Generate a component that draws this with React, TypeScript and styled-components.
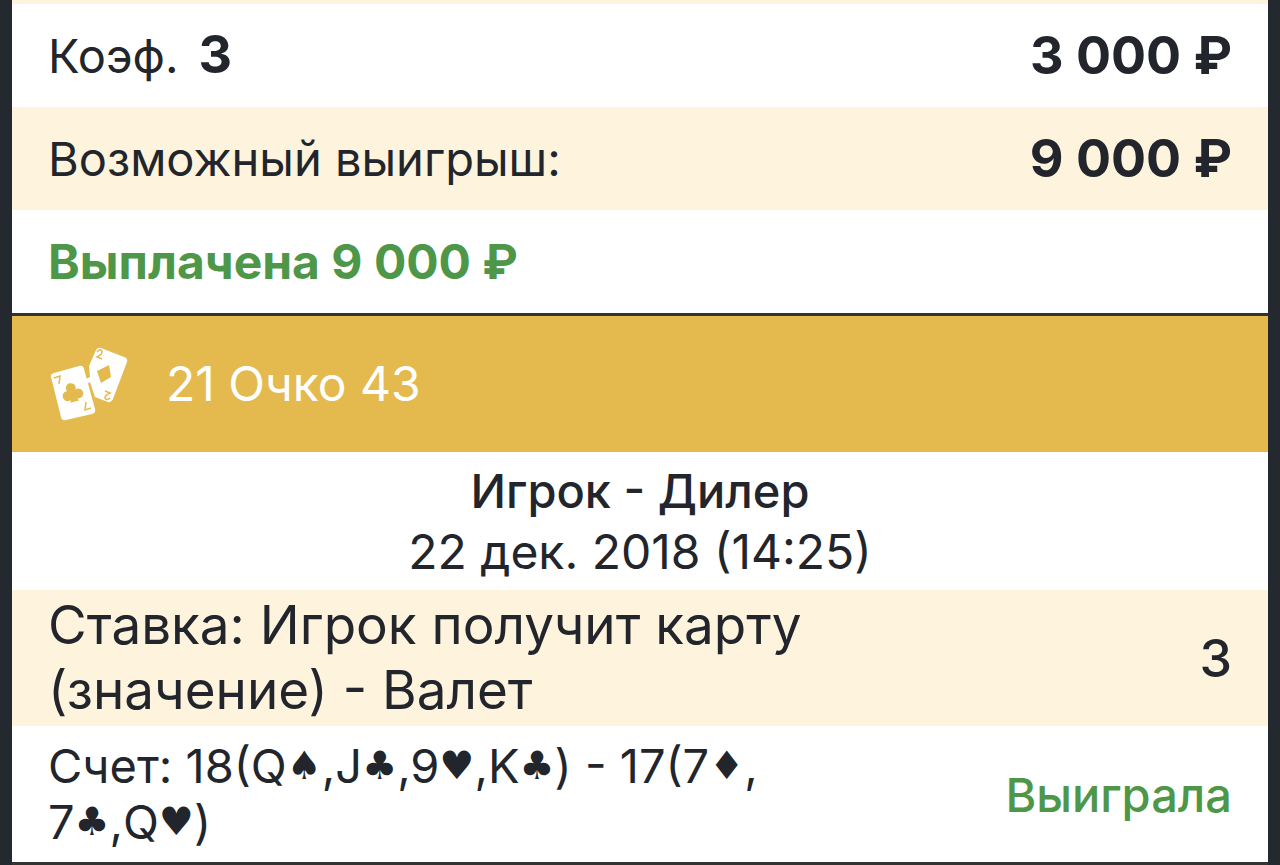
import React from 'react';
import styled, { createGlobalStyle } from 'styled-components';

const ink = '#22262c';
const cream = '#fef3dc';
const gold = '#e4ba4f';
const green = '#4f9748';

const GlobalStyle = createGlobalStyle`
  * { box-sizing: border-box; }
  body {
    margin: 0;
    background: #23292e;
    color: ${ink};
    font-family: Inter, 'Liberation Sans', sans-serif;
    font-size: 47px;
  }
`;

const Page = styled.main`
  padding: 0 12px;
`;

const Coupon = styled.article`
  background: #fff;
  border-bottom: 3px solid #33342f;
`;

const PreviousRow = styled.div`
  height: 4px;
  background: ${cream};
`;

const Row = styled.div<{ $tinted?: boolean; $tall?: boolean }>`
  display: flex;
  align-items: center;
  justify-content: space-between;
  gap: 24px;
  min-height: ${(p) => (p.$tall ? 136 : 103)}px;
  padding: 0 36px;
  background: ${(p) => (p.$tinted ? cream : '#fff')};
`;

const Label = styled.span`
  line-height: 56px;
`;

const Amount = styled.strong`
  font-size: 52px;
  font-weight: 700;
  line-height: 56px;
`;

const Odds = styled(Amount)`
  margin-left: 20px;
`;

const Paid = styled.strong`
  font-size: 48px;
  font-weight: 700;
  line-height: 56px;
  color: ${green};
`;

const GameHeader = styled.header`
  display: flex;
  align-items: center;
  gap: 38px;
  min-height: 136px;
  padding: 0 36px;
  background: ${gold};
  color: #fff;
`;

const GameTitle = styled.h2`
  margin: 0;
  font-size: 48px;
  font-weight: 400;
  line-height: 56px;
`;

const CardsIcon = styled.svg`
  display: block;
  width: 80px;
  height: 80px;
  flex: none;
`;

const Match = styled.div`
  min-height: 138px;
  padding: 8px 36px;
  text-align: center;
  line-height: 61px;
`;

const Teams = styled.h3`
  margin: 0;
  font-size: 47px;
  font-weight: 500;
`;

const MatchTime = styled.time`
  display: block;
  font-size: 48px;
`;

const Bet = styled.p`
  margin: 0;
  max-width: 820px;
  font-size: 53px;
  line-height: 65px;
  margin: 3px 0;
`;

const BetOdds = styled.span`
  font-size: 52px;
  font-weight: 500;
`;

const Score = styled.p`
  margin: 0;
  max-width: 740px;
  font-size: 47px;
  line-height: 56px;
`;

const Suit = styled.span`
  font-family: 'DejaVu Sans', sans-serif;
  font-size: 39px;
  line-height: 1;
  vertical-align: 4px;
`;

const Result = styled.span`
  font-weight: 500;
  color: ${green};
`;

const PlayingCards = () => (
  <CardsIcon viewBox="0 0 80 80" aria-hidden="true">
    <path d="M48 6Q50 3 53 4L76 13Q80 14 79 18L65 55Q63 59 60 58L47 53L42 38L38 41L36 36L42 33L41 22Z" fill="#fff" />
    <path d="M6 29L31 22Q35 21 36 25L47 65Q48 69 44 70L18 76Q14 77 13 73L3 33Q2 30 6 29Z" fill="#fff" />
    <path d="M61 21L63 33L53 39L49 27Z" fill={gold} />
    <g fill={gold} transform="rotate(-14 24 49)">
      <circle cx="24" cy="44" r="5" />
      <circle cx="19" cy="51" r="5" />
      <circle cx="30" cy="51" r="5" />
      <path d="M22 44H27L26 51L29 58H20L23 51Z" />
    </g>
    <g fill="none" stroke={gold} strokeWidth="1.5">
      <path d="M6 34L12 32L11 40" />
      <path d="M43 64L37 66L38 58" />
      <path d="M49 8Q52 4 54 7Q55 10 49 13L54 15" />
      <path d="M62 54Q59 57 57 54Q57 51 62 49L57 47" />
    </g>
  </CardsIcon>
);

export default function App() {
  return (
    <>
      <GlobalStyle />
      <Page>
        <Coupon>
          <PreviousRow />
          <Row>
            <Label>
              Коэф.<Odds>3</Odds>
            </Label>
            <Amount>3 000 ₽</Amount>
          </Row>
          <Row $tinted>
            <Label>Возможный выигрыш:</Label>
            <Amount>9 000 ₽</Amount>
          </Row>
          <Row>
            <Paid>Выплачена 9 000 ₽</Paid>
          </Row>
        </Coupon>
        <Coupon>
          <GameHeader>
            <PlayingCards />
            <GameTitle>21 Очко 43</GameTitle>
          </GameHeader>
          <Match>
            <Teams>Игрок - Дилер</Teams>
            <MatchTime dateTime="2018-12-22T14:25">22 дек. 2018 (14:25)</MatchTime>
          </Match>
          <Row $tinted $tall>
            <Bet>Ставка: Игрок получит карту (значение) - Валет</Bet>
            <BetOdds>3</BetOdds>
          </Row>
          <Row $tall>
            <Score>
              Счет: 18(Q<Suit>♠</Suit>,J<Suit>♣</Suit>,9<Suit>♥</Suit>,K<Suit>♣</Suit>) - 17(7<Suit>♦</Suit>,{' '}
              7<Suit>♣</Suit>,Q<Suit>♥</Suit>)
            </Score>
            <Result>Выиграла</Result>
          </Row>
        </Coupon>
      </Page>
    </>
  );
}
